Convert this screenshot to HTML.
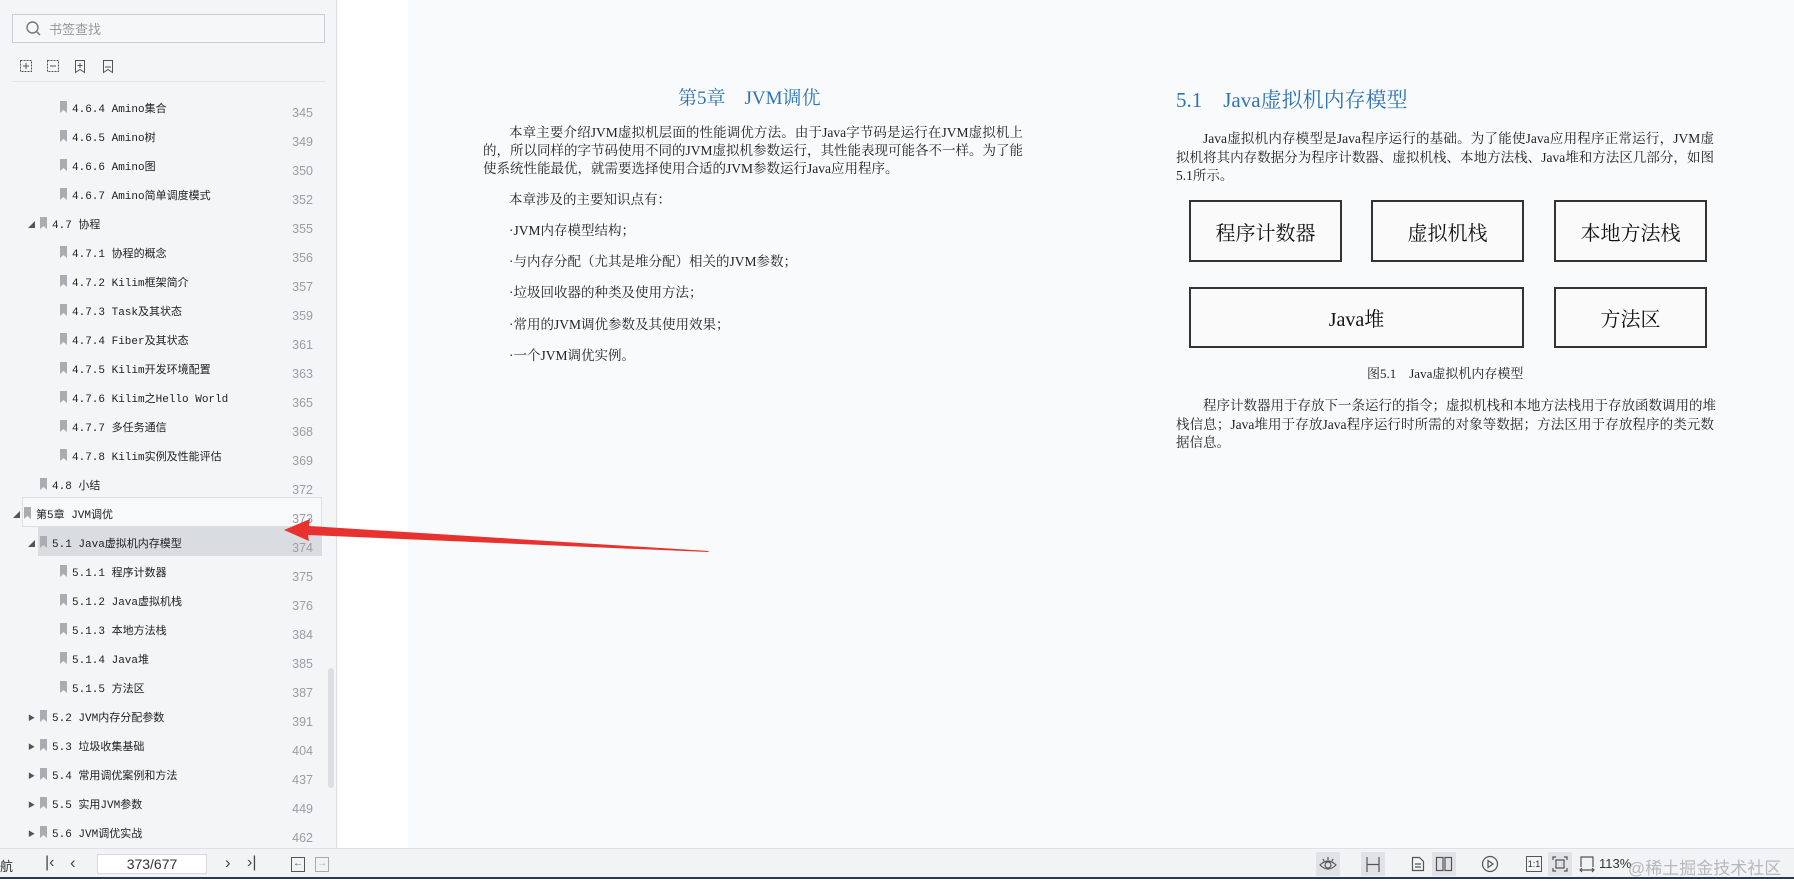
<!DOCTYPE html>
<html><head><meta charset="utf-8"><style>
*{margin:0;padding:0;box-sizing:border-box}
body{width:1794px;height:879px;overflow:hidden;background:#f9fafb;position:relative;font-family:"Liberation Sans","Noto Sans CJK SC",sans-serif}
.abs{position:absolute}
#side{left:0;top:0;width:337px;height:848px;background:#f3f5f7;border-right:1px solid #dcdfe3}
.row{position:absolute;height:29px;font-family:"Liberation Mono","Noto Sans CJK SC",monospace;font-size:11px;color:#222;white-space:nowrap}
.row .t{position:absolute;top:7px}
.row .bm{position:absolute;top:8px;width:7px;height:12px;background:#a9adb2;clip-path:polygon(0 0,100% 0,100% 100%,50% 75%,0 100%)}
.row .tri{position:absolute;top:11px;font-size:7px;color:#555}
.pg{position:absolute;right:24px;font-size:12.5px;color:#9a9da2;font-family:"Liberation Sans",sans-serif}
.ln{position:absolute;font-family:"Liberation Serif","Noto Serif CJK SC",serif;color:#222;white-space:nowrap;text-align:justify;text-align-last:justify;font-size:13.5px}
.bx{position:absolute;border:2px solid #333;background:#fafafa;display:flex;align-items:center;justify-content:center;font-family:"Liberation Serif","Noto Serif CJK SC",serif;font-size:20px;color:#111}
#bot{left:0;top:848px;width:1794px;height:31px;background:#f1f3f5;border-top:1px solid #dde0e4}
.ic{position:absolute;top:6px;color:#444;font-size:14px}
</style></head><body>
<div id="side" class="abs">
 <div class="abs" style="left:12px;top:14px;width:313px;height:29px;border:1px solid #c9cdd2;background:#f6f7f9"></div>
 <svg class="abs" style="left:25px;top:20px" width="18" height="18"><circle cx="7.5" cy="7.5" r="5.5" fill="none" stroke="#777" stroke-width="1.4"/><line x1="11.5" y1="11.5" x2="15" y2="15" stroke="#777" stroke-width="1.5"/></svg>
 <div class="abs" style="left:49px;top:19px;font-size:13px;color:#999">书签查找</div>
 <svg class="abs" style="left:18px;top:59px" width="100" height="16" fill="none" stroke="#555" stroke-width="1">
  <rect x="2.5" y="1.5" width="11" height="11" stroke-dasharray="2 1"/><path d="M8 4v6M5 7h6"/>
  <rect x="29.5" y="1.5" width="11" height="11" stroke-dasharray="2 1"/><path d="M32 7h6"/>
  <path d="M57.5 1.5h9v12l-4.5-3-4.5 3z M62 4v5M59.5 6.5h5"/>
  <path d="M85.5 1.5h9v12l-4.5-3-4.5 3z M87 8h6"/>
 </svg>
 <div class="abs" style="left:12px;top:81px;width:313px;height:1px;background:#e2e4e7"></div>
 <div class="abs" style="left:22px;top:497px;width:300px;height:30px;border:1px solid #dde0e3;background:#f8f9fa"></div>
 <div class="abs" style="left:38px;top:527px;width:284px;height:29px;background:#d9dde1"></div>
 <div class="abs" style="left:328px;top:668px;width:6px;height:120px;border-radius:3px;background:#dcdfe3"></div>
</div>
<div id="rows"></div>
<script>
var R=[[2,"4.6.4 Amino集合",345],[2,"4.6.5 Amino树",349],[2,"4.6.6 Amino图",350],[2,"4.6.7 Amino简单调度模式",352],[1,"4.7 协程",355,"◢"],[2,"4.7.1 协程的概念",356],[2,"4.7.2 Kilim框架简介",357],[2,"4.7.3 Task及其状态",359],[2,"4.7.4 Fiber及其状态",361],[2,"4.7.5 Kilim开发环境配置",363],[2,"4.7.6 Kilim之Hello World",365],[2,"4.7.7 多任务通信",368],[2,"4.7.8 Kilim实例及性能评估",369],[1,"4.8 小结",372],[0,"第5章 JVM调优",373,"◢"],[1,"5.1 Java虚拟机内存模型",374,"◢"],[2,"5.1.1 程序计数器",375],[2,"5.1.2 Java虚拟机栈",376],[2,"5.1.3 本地方法栈",384],[2,"5.1.4 Java堆",385],[2,"5.1.5 方法区",387],[1,"5.2 JVM内存分配参数",391,"▶"],[1,"5.3 垃圾收集基础",404,"▶"],[1,"5.4 常用调优案例和方法",437,"▶"],[1,"5.5 实用JVM参数",449,"▶"],[1,"5.6 JVM调优实战",462,"▶"]];
var h="";var ic=[24,40,56],tx=[36,52,68],tr=[13,28,28];
R.forEach(function(r,i){var y=93+29*i;var l=r[0];
h+='<div class="row" style="left:0;top:'+y+'px;width:337px">'+(r[3]?'<span class="tri" style="left:'+tr[l]+'px">'+r[3]+'</span>':'')+'<span class="bm" style="left:'+(ic[l]-(l==2?-4:0))+'px"></span><span class="t" style="left:'+(tx[l]+(l==2?4:0))+'px">'+r[1]+'</span><span class="pg" style="top:13px">'+r[2]+'</span></div>';});
document.getElementById("rows").innerHTML=h;
</script>
<div class="abs" style="left:338px;top:0;width:70px;height:848px;background:#fff"></div>

<!-- left page -->
<div class="abs" style="left:678px;top:83px;font-family:'Liberation Serif','Noto Serif CJK SC',serif;font-size:19px;color:#2e74b5;white-space:nowrap">第5章&nbsp;&nbsp;&nbsp;&nbsp;JVM调优</div>
<div class="ln" style="left:509px;top:121px;width:514px">本章主要介绍JVM虚拟机层面的性能调优方法。由于Java字节码是运行在JVM虚拟机上</div>
<div class="ln" style="left:483px;top:139px;width:540px">的，所以同样的字节码使用不同的JVM虚拟机参数运行，其性能表现可能各不一样。为了能</div>
<div class="ln" style="left:483px;top:157px;width:410px">使系统性能最优，就需要选择使用合适的JVM参数运行Java应用程序。</div>
<div class="ln" style="left:509px;top:188px;width:154px">本章涉及的主要知识点有：</div>
<div class="ln" style="left:509px;top:219px;width:118px">·JVM内存模型结构；</div>
<div class="ln" style="left:509px;top:250px;width:283px">·与内存分配（尤其是堆分配）相关的JVM参数；</div>
<div class="ln" style="left:509px;top:281px;width:184px">·垃圾回收器的种类及使用方法；</div>
<div class="ln" style="left:509px;top:313px;width:214px">·常用的JVM调优参数及其使用效果；</div>
<div class="ln" style="left:509px;top:344px;width:119px">·一个JVM调优实例。</div>

<!-- right page -->
<div class="abs" style="left:1176px;top:84px;font-family:'Liberation Serif','Noto Serif CJK SC',serif;font-size:21px;color:#2e74b5;white-space:nowrap">5.1&nbsp;&nbsp;&nbsp;&nbsp;Java虚拟机内存模型</div>
<div class="ln" style="left:1203px;top:127px;width:511px">Java虚拟机内存模型是Java程序运行的基础。为了能使Java应用程序正常运行，JVM虚</div>
<div class="ln" style="left:1176px;top:146px;width:538px">拟机将其内存数据分为程序计数器、虚拟机栈、本地方法栈、Java堆和方法区几部分，如图</div>
<div class="ln" style="left:1176px;top:164px;text-align-last:auto">5.1所示。</div>
<div class="bx" style="left:1189px;top:200px;width:153px;height:62px">程序计数器</div>
<div class="bx" style="left:1371px;top:200px;width:153px;height:62px">虚拟机栈</div>
<div class="bx" style="left:1554px;top:200px;width:153px;height:62px">本地方法栈</div>
<div class="bx" style="left:1189px;top:287px;width:335px;height:61px">Java堆</div>
<div class="bx" style="left:1554px;top:287px;width:153px;height:61px">方法区</div>
<div class="ln" style="left:1367px;top:363px;font-size:13px;text-align-last:auto">图5.1&nbsp;&nbsp;&nbsp;&nbsp;Java虚拟机内存模型</div>
<div class="ln" style="left:1203px;top:394px;width:511px">程序计数器用于存放下一条运行的指令；虚拟机栈和本地方法栈用于存放函数调用的堆</div>
<div class="ln" style="left:1176px;top:413px;width:538px">栈信息；Java堆用于存放Java程序运行时所需的对象等数据；方法区用于存放程序的类元数</div>
<div class="ln" style="left:1176px;top:431px;text-align-last:auto">据信息。</div>

<!-- arrow -->
<svg class="abs" style="left:0;top:0" width="1794" height="879"><polygon points="284,530 310,519 309,526 709,551 708,552 308,535 309,541" fill="#e8322f"/></svg>

<div id="bot" class="abs">
 <div class="abs" style="left:0;top:7px;font-size:13px;color:#333">航</div>
 <div class="ic" style="left:45px;top:5px;font-size:16px">|‹</div>
 <div class="ic" style="left:70px;top:4px;font-size:17px">‹</div>
 <div class="abs" style="left:97px;top:5px;width:110px;height:20px;background:#fff;border:1px solid #d7dade;text-align:center;font-size:14px;line-height:18px;color:#333">373/677</div>
 <div class="ic" style="left:225px;top:4px;font-size:17px">›</div>
 <div class="ic" style="left:247px;top:5px;font-size:16px">›|</div>
 <div class="abs" style="left:291px;top:8px;width:14px;height:15px;border:1px solid #555;font-size:10px;line-height:12px;text-align:center;color:#555">←</div>
 <div class="abs" style="left:315px;top:8px;width:14px;height:15px;border:1px solid #aaa;font-size:10px;line-height:12px;text-align:center;color:#aaa">→</div>
 <div class="abs" style="left:1316px;top:3px;width:24px;height:24px;background:#dfe2e6"></div>
 <svg class="abs" style="left:1319px;top:7px" width="18" height="16" fill="none" stroke="#555" stroke-width="1.2"><path d="M1 9q8-8 16 0q-8 8-16 0z"/><circle cx="9" cy="9" r="3"/><path d="M4 3l1 2M9 1v3M14 3l-1 2"/></svg>
 <div class="abs" style="left:1361px;top:3px;width:24px;height:24px;background:#dfe2e6"></div>
 <svg class="abs" style="left:1365px;top:7px" width="16" height="17" fill="none" stroke="#555" stroke-width="1.2"><path d="M2 1v15M14 1v15M2 8.5h12"/></svg>
 <svg class="abs" style="left:1411px;top:7px" width="14" height="16" fill="none" stroke="#555" stroke-width="1.2"><path d="M1.5 1.5h7l4 4v9h-11z M4 8h6M4 11h6"/></svg>
 <div class="abs" style="left:1432px;top:3px;width:24px;height:24px;background:#dfe2e6"></div>
 <svg class="abs" style="left:1435px;top:7px" width="18" height="16" fill="none" stroke="#555" stroke-width="1.2"><rect x="1.5" y="1.5" width="6.5" height="13"/><rect x="10" y="1.5" width="6.5" height="13"/></svg>
 <svg class="abs" style="left:1481px;top:6px" width="18" height="18" fill="none" stroke="#555" stroke-width="1.2"><circle cx="9" cy="9" r="7.5"/><path d="M7 5.5v7l5-3.5z"/></svg>
 <div class="abs" style="left:1526px;top:7px;width:16px;height:16px;border:1px solid #555;font-size:9px;line-height:14px;text-align:center;color:#333">1:1</div>
 <div class="abs" style="left:1548px;top:3px;width:24px;height:24px;background:#dfe2e6"></div>
 <svg class="abs" style="left:1552px;top:7px" width="16" height="16" fill="none" stroke="#555" stroke-width="1.2"><path d="M1 4V1h3M12 1h3v3M15 12v3h-3M4 15H1v-3M4 4h8v8H4z"/></svg>
 <svg class="abs" style="left:1579px;top:6px" width="16" height="18" fill="none" stroke="#555" stroke-width="1.2"><path d="M2 12V2h12v10M1 15h14M3 13l-2 2 2 2M13 13l2 2-2 2"/></svg>
 <div class="abs" style="left:1599px;top:7px;font-size:13px;color:#333">113%</div>
 <div class="abs" style="left:1628px;top:5px;font-size:17px;color:#b5b8bc;white-space:nowrap">@稀土掘金技术社区</div>
</div>
<div class="abs" style="left:0;top:877px;width:1794px;height:2px;background:#2b3a4a"></div>
</body></html>
